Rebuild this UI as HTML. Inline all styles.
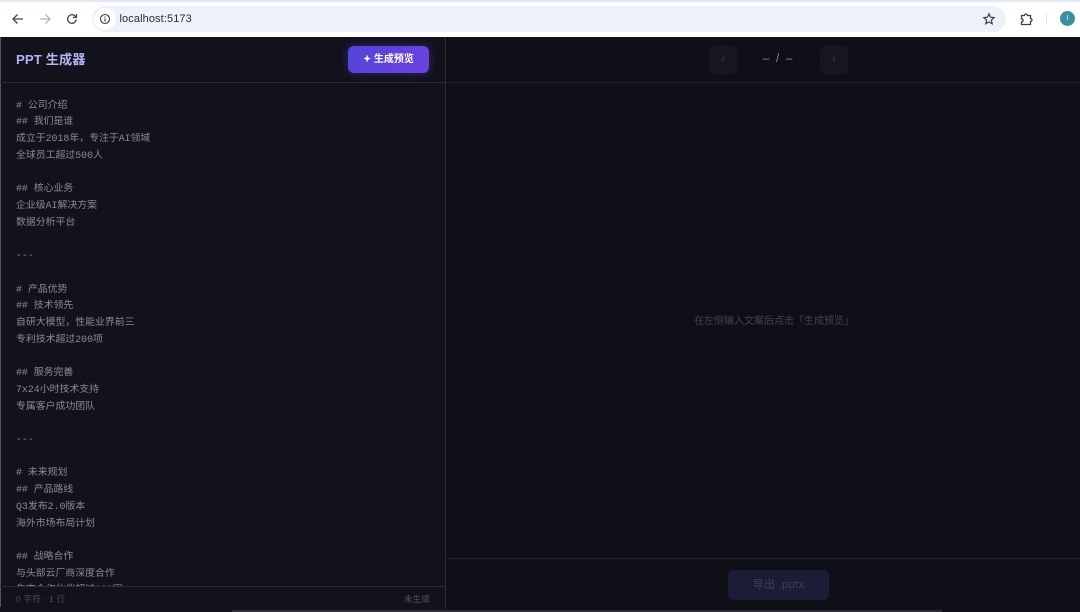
<!DOCTYPE html>
<html lang="zh">
<head>
<meta charset="utf-8">
<title>PPT 生成器</title>
<style>
*{box-sizing:border-box;margin:0;padding:0}
html,body{width:1080px;height:612px;overflow:hidden;background:#0f0f17}
body{position:relative;font-family:"Liberation Sans","Noto Sans CJK SC",sans-serif}
.abs{position:absolute}
#wrap{position:absolute;left:0;top:0;width:1080px;height:612px;filter:blur(.3px)}
#chrome{left:0;top:0;width:1080px;height:37px;background:#fff}
#tabstrip{left:0;top:0;width:1080px;height:2px;background:#dfe8f6}
#omni{left:92px;top:6px;width:914px;height:26px;border-radius:13px;background:#edf1f9}
#infoc{left:94px;top:8px;width:22px;height:22px;border-radius:50%;background:#fff}
#url{left:119.5px;top:12px;font-size:11px;line-height:14px;color:#2b2d31;letter-spacing:.1px}
#left{left:0;top:37px;width:445px;height:575px;background:#12121d;overflow:hidden}
#right{left:446px;top:37px;width:634px;height:575px;background:#0f0f18}
#sep{left:445px;top:37px;width:1px;height:575px;background:#2a2a3a}
#edge{left:0;top:37px;width:1px;height:570px;background:#55555f}
#h1{left:0;top:82px;width:445px;height:1px;background:#2a2a3a}
#h2{left:446px;top:82px;width:634px;height:1px;background:#20202c}
#h3{left:446px;top:558px;width:634px;height:1px;background:#20202c}
#h4{left:0;top:586px;width:445px;height:1px;background:#2a2a3a}
#title{left:16px;top:51px;font-size:13.2px;line-height:18px;font-weight:700;color:#b7b2f2;letter-spacing:.1px}
#gen{left:348px;top:46px;width:81px;height:27px;border-radius:6px;background:linear-gradient(135deg,#4f46d8,#7040e0);box-shadow:0 0 9px rgba(99,70,230,.4);color:#fff;font-size:10px;line-height:27px;font-weight:700;text-align:center}
#code{left:16px;top:97.600px;width:420px;height:488.400px;overflow:hidden;font-family:"Liberation Mono","Noto Sans CJK SC",monospace;font-size:9.9px;line-height:16.72px;color:#8a8a96;white-space:pre}
#foot{left:1px;top:587px;width:444px;height:25px;background:#12121d}
#cnt{left:16px;top:593px;font-size:8.5px;line-height:12px;color:#4c4c5a;letter-spacing:.2px}
#st{left:404px;top:593px;font-size:8.5px;line-height:12px;color:#55555f;letter-spacing:.1px}
.pg{top:46px;width:28px;height:28px;border-radius:5px;background:#171724;color:#3d3d50;font-size:11px;line-height:27px;text-align:center}
#pgt{left:756px;top:52px;width:45px;text-align:center;font-size:11.5px;line-height:15px;color:#8b8b97;white-space:pre;letter-spacing:1.800px}
#msg{left:694px;top:315px;font-size:10px;line-height:14px;color:#41415a;white-space:pre}
#exp{left:728px;top:570px;width:101px;height:30px;border-radius:6px;background:#1c1c36;color:#3f3f58;font-size:11px;line-height:30px;text-align:center;font-weight:400;letter-spacing:.4px}
#bot{left:232px;top:610px;width:710px;height:2px;background:#2e2e36}
svg{position:absolute;overflow:visible}
</style>
</head>
<body>
<div id="wrap">
<div class="abs" id="chrome"></div>
<div class="abs" id="tabstrip"></div>
<svg style="left:11px;top:12px" width="14" height="14" viewBox="0 0 14 14" fill="none" stroke="#45474b" stroke-width="1.3"><path d="M12 7H2M6.500 2.500 2 7l4.500 4.500"/></svg>
<svg style="left:38px;top:12px" width="14" height="14" viewBox="0 0 14 14" fill="none" stroke="#b4b6ba" stroke-width="1.3"><path d="M2 7h10M7.500 2.500 12 7l-4.500 4.500"/></svg>
<svg style="left:65px;top:12px" width="14" height="14" viewBox="0 0 14 14" fill="none" stroke="#45474b" stroke-width="1.3"><path d="M11.200 7.500A4.300 4.300 0 1 1 10 4L11.500 5.400"/><path d="M11.500 2v3.500H8"/></svg>
<div class="abs" id="omni"></div>
<div class="abs" id="infoc"></div>
<svg style="left:99px;top:13px" width="12" height="12" viewBox="0 0 12 12" fill="none" stroke="#3a3c40" stroke-width="1.100"><circle cx="6" cy="6" r="4.500"/><path d="M6 5.400V8.600M6 3.400v1.100"/></svg>
<div class="abs" id="url">localhost:5173</div>
<svg style="left:982px;top:12px" width="14" height="14" viewBox="0 0 14 14" fill="none" stroke="#3f4145" stroke-width="1.200"><path d="M7 1.800 8.500 5.200l3.700.4-2.800 2.500.8 3.700L7 9.900l-3.200 1.900.8-3.700L1.800 5.600l3.700-.4z"/></svg>
<svg style="left:1020px;top:12px" width="14" height="14" viewBox="0 0 14 14" fill="none" stroke="#3f4145" stroke-width="1.300"><path d="M1.500 3.500h3a1.500 1.500 0 0 1 3 0h3v3a1.500 1.500 0 0 1 0 3v3H1.500V10a1.600 1.600 0 0 0 0-3.200z"/></svg>
<div class="abs" style="left:1046px;top:13px;width:1px;height:12px;background:#dfe3ec"></div>
<div class="abs" style="left:1060px;top:11px;width:15px;height:15px;border-radius:50%;background:#3d8f9f;color:#e6f2f4;font-size:7px;line-height:15px;text-align:center">I</div>

<div class="abs" id="left"></div>
<div class="abs" id="right"></div>
<div class="abs" id="edge"></div>
<div class="abs" id="sep"></div>
<div class="abs" id="h1"></div>
<div class="abs" id="h2"></div>
<div class="abs" id="title">PPT 生成器</div>
<div class="abs" id="gen"><span style="font-size:9.5px">✦</span> 生成预览</div>

<div class="abs" id="code"># 公司介绍
## 我们是谁
成立于2018年，专注于AI领域
全球员工超过500人

## 核心业务
企业级AI解决方案
数据分析平台

---

# 产品优势
## 技术领先
自研大模型，性能业界前三
专利技术超过200项

## 服务完善
7x24小时技术支持
专属客户成功团队

---

# 未来规划
## 产品路线
Q3发布2.0版本
海外市场布局计划

## 战略合作
与头部云厂商深度合作
生态合作伙伴超过100家</div>
<div class="abs" id="foot"></div>
<div class="abs" id="h4"></div>
<div class="abs" id="cnt">0 字符 · 1 行</div>
<div class="abs" id="st">未生成</div>

<div class="abs pg" style="left:709px">‹</div>
<div class="abs" id="pgt">– / –</div>
<div class="abs pg" style="left:820px">›</div>
<div class="abs" id="msg">在左侧输入文案后点击「生成预览」</div>
<div class="abs" id="h3"></div>
<div class="abs" id="exp">导出 .pptx</div>
<div class="abs" id="bot"></div>
</div>
</body>
</html>
